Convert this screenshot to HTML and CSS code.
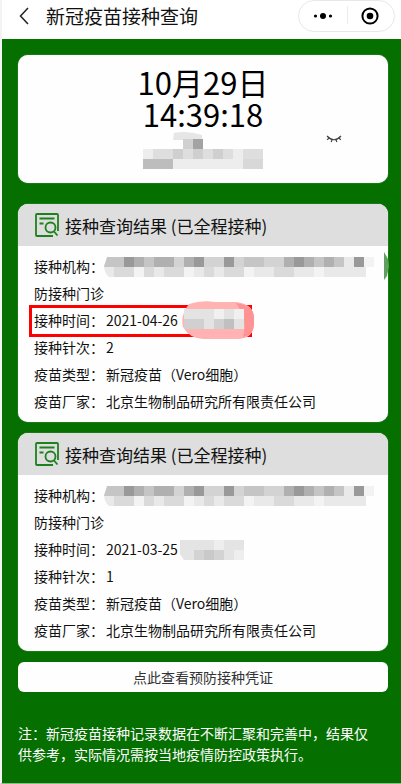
FILE: index.html
```html
<!DOCTYPE html>
<html lang="zh-CN">
<head>
    <meta charset="UTF-8">
    <meta name="viewport" content="width=device-width, initial-scale=1.0">
    <title>新冠疫苗接种查询</title>
    <link rel="stylesheet" href="styles.css">
</head>
<body>

    <!-- shared drawings -->
    <svg class="defs" width="0" height="0" aria-hidden="true">
        <symbol id="icon-result" viewBox="0 0 24 24">
            <path d="M18 23H2Q1 23 1 22V2Q1 1 2 1H22Q23 1 23 2V18M4.5 5.5H19.5M4.5 10.5H8.5"/>
            <circle cx="15.5" cy="14.5" r="5"/>
            <path d="M19 18.5L22.5 22.5"/>
        </symbol>
        <symbol id="mosaic-long" viewBox="0 0 270 20">
            <path fill="#e9e9e9" d="M4 0H262V20H5Q0 16 0 8Z"/>
            <path fill="#c5c5c5" d="M3 0H20V10H0ZM40 0h10v10h-10zM140 0h20v10h-20zM210 0h10v10h-10zM230 0h10v10h-10z"/>
            <path fill="#999" d="M20 0h10v10h-10zM90 0h10v10h-10zM120 0h10v10h-10zM190 0h10v10h-10zM250 0h10v10h-10z"/>
            <path fill="#b0b0b0" d="M30 0h10v10h-10zM50 0h20v10h-20zM80 0h10v10h-10zM180 0h10v10h-10zM200 0h10v10h-10zM220 0h10v10h-10z"/>
            <path fill="#d3d3d3" d="M70 0h10v10h-10zM100 0h20v10h-20zM130 0h10v10h-10zM160 0h20v10h-20z"/>
            <path fill="#dadada" d="M10 10h20v10h-20zM40 10h10v10h-10zM60 10h20v10h-20zM100 10h10v10h-10zM120 10h20v10h-20zM170 10h20v10h-20z"/>
            <path fill="#f3f3f3" d="M30 10h10v10h-10zM80 10h10v10h-10zM140 10h10v10h-10zM210 10h10v10h-10zM260 0h10v10h-10z"/>
        </symbol>
    </svg>

    <header class="navbar">
        <button class="back" type="button" aria-label="返回">
            <svg width="10" height="18" viewBox="0 0 10 18"><path d="M9 1L1.5 9L9 17"/></svg>
        </button>
        <h1>新冠疫苗接种查询</h1>
        <div class="capsule">
            <button type="button" aria-label="更多">
                <svg width="20" height="8" viewBox="0 0 20 8"><circle cx="2.5" cy="4" r="1.6"/><circle cx="10" cy="4" r="3"/><circle cx="17.5" cy="4" r="1.6"/></svg>
            </button>
            <button type="button" aria-label="关闭">
                <svg width="18" height="18" viewBox="0 0 18 18"><circle class="ring" cx="9" cy="9" r="7.6"/><circle cx="9" cy="9" r="3.3"/></svg>
            </button>
        </div>
    </header>

    <main class="page">
        <section class="card clock">
            <div class="date">10月29日</div>
            <div class="time">14:39:18</div>
            <svg class="person" width="120" height="38" viewBox="0 0 120 38" aria-hidden="true">
                <path fill="#e6e6e6" d="M31 2Q44 -1 59 4V9H30Z"/>
                <path fill="#d0d0d0" d="M40 8h10v10h-10z"/>
                <path fill="#a3a3a3" d="M50 8h10v10h-10z"/>
                <path fill="#dedede" d="M0 18h120v10h-120z"/>
                <path fill="#cfcfcf" d="M30 18h10v10h-10zM50 18h10v10h-10zM70 18h10v10h-10z"/>
                <path fill="#ededed" d="M0 18h10v10h-10zM90 18h10v10h-10zM30 28h70v10h-70z"/>
                <path fill="#bdbdbd" d="M0 28h30v10h-30z"/>
                <path fill="#d8d8d8" d="M100 28h20v10h-20z"/>
            </svg>
            <button class="eye" type="button" aria-label="显示姓名">
                <svg width="16" height="8" viewBox="0 0 16 8"><path d="M1 1Q8 8.5 15 1M3 3L1.2 4.8M6 4.6L5.2 7M10 4.6L10.8 7M13 3L14.8 4.8"/></svg>
            </button>
        </section>

        <section class="card result first">
            <h2><svg class="icon" width="24" height="24"><use href="#icon-result"/></svg>接种查询结果 (已全程接种)</h2>
            <div class="rows">
                <div class="row"><span class="label">接种机构：</span><svg class="long" width="270" height="20"><use href="#mosaic-long"/></svg></div>
                <div class="row">防接种门诊</div>
                <div class="row marked">
                    <span class="label">接种时间：</span><span>2021-04-26</span>
                    <svg class="smudge" width="74" height="38" viewBox="0 0 74 38" aria-hidden="true">
                        <path fill="#ffb3b3" d="M8 3Q20 -1 34 1H55Q73 3 73 17V24Q72 37 58 38H22Q8 37 2 26Q-1 14 8 3Z"/>
                        <path fill="#ff9292" d="M55 2Q73 4 73 17V24Q72 34 62 36Q67 18 55 2Z"/>
                        <path fill="#e3e3e3" d="M3 8H63V28H3Z"/>
                        <path fill="#d0d0d0" d="M3 18h20v10h-20zM33 18h10v10h-10z"/>
                        <path fill="#c0c0c0" d="M43 18h10v10h-10z"/>
                        <path fill="#f0f0f0" d="M33 8h10v10h-10zM53 8h10v10h-10z"/>
                    </svg>
                </div>
                <div class="row"><span class="label">接种针次：</span><span>2</span></div>
                <div class="row"><span class="label">疫苗类型：</span><span>新冠疫苗（Vero细胞）</span></div>
                <div class="row"><span class="label">疫苗厂家：</span><span>北京生物制品研究所有限责任公司</span></div>
            </div>
            <svg class="chip" width="5" height="28" viewBox="0 0 5 28" aria-hidden="true"><path d="M0 0L4 7L5 14L3 24L0 28Z"/></svg>
        </section>

        <section class="card result">
            <h2><svg class="icon" width="24" height="24"><use href="#icon-result"/></svg>接种查询结果 (已全程接种)</h2>
            <div class="rows">
                <div class="row"><span class="label">接种机构：</span><svg class="long" width="270" height="20"><use href="#mosaic-long"/></svg></div>
                <div class="row">防接种门诊</div>
                <div class="row">
                    <span class="label">接种时间：</span><span>2021-03-25</span>
                    <svg class="short" width="64" height="20" viewBox="0 0 64 20" aria-hidden="true">
                        <path fill="#e4e4e4" d="M0 0H64V20H4L0 14Z"/>
                        <path fill="#d3d3d3" d="M14 10h10v10h-10zM34 10h10v10h-10z"/>
                        <path fill="#c9c9c9" d="M24 10h10v10h-10z"/>
                        <path fill="#eee" d="M34 0h10v10h-10zM54 10h10v10h-10z"/>
                    </svg>
                </div>
                <div class="row"><span class="label">接种针次：</span><span>1</span></div>
                <div class="row"><span class="label">疫苗类型：</span><span>新冠疫苗（Vero细胞）</span></div>
                <div class="row"><span class="label">疫苗厂家：</span><span>北京生物制品研究所有限责任公司</span></div>
            </div>
        </section>

        <button class="voucher" type="button">点此查看预防接种凭证</button>

        <p class="note">注：新冠疫苗接种记录数据在不断汇聚和完善中，结果仅供参考，实际情况需按当地疫情防控政策执行。</p>
    </main>

</body>
</html>
```
FILE: styles.css
```css
*, *::before {
    box-sizing: border-box;
}
body {
    margin: 0;
    border-left: 2px solid #f3f3f3;
    border-bottom: 1px solid #8fb98f;
    background: #057000;
    color: #111;
    font-family: "Noto Sans CJK SC", sans-serif;
    font-size: 14px;
}
button {
    margin: 0;
    padding: 0;
    border: none;
    background: none;
    color: inherit;
    font: inherit;
    cursor: pointer;
}
svg {
    display: block;
    flex: none;
}
h1, h2, p {
    margin: 0;
    font-weight: normal;
}
.defs {
    position: absolute;
}

/* top bar */
.navbar {
    display: flex;
    align-items: flex-start;
    height: 39px;
    padding: 0 6px 0 17px;
    background: #fff;
}
.back {
    padding: 7px 0;
}
.back svg {
    fill: none;
    stroke: #222;
    stroke-width: 1.5;
}
.navbar h1 {
    flex: 1;
    margin-left: 17px;
    font-size: 19px;
    line-height: 32px;
}
.capsule {
    display: flex;
    width: 97px;
    height: 32px;
    border: 1px solid #e8e8e8;
    border-radius: 16px;
}
.capsule button {
    flex: 1;
    display: flex;
    align-items: center;
    justify-content: center;
}
.capsule button + button {
    position: relative;
}
.capsule button + button::before {
    content: "";
    position: absolute;
    left: 0;
    top: 5px;
    bottom: 7px;
    width: 1px;
    background: #ececec;
}
.ring {
    fill: none;
    stroke: #000;
    stroke-width: 2;
}

.page {
    padding: 16px 13px 18px 16px;
}
.card {
    position: relative;
    background: #fefefe;
    border-radius: 10px;
    box-shadow: 0 0 1px #cfe0cf;
}

/* date and time */
.clock {
    display: flex;
    flex-direction: column;
    align-items: center;
    height: 128px;
    margin-bottom: 21px;
    padding-top: 11px;
    color: #000;
    font-size: 31px;
    line-height: 32px;
}
.person {
    margin-top: 1px;
}
.eye {
    position: absolute;
    right: 46px;
    top: 80px;
}
.eye svg {
    fill: none;
    stroke: #444;
    stroke-width: 1.2;
}

/* results */
.result {
    margin-bottom: 11px;
}
.result h2 {
    display: flex;
    align-items: center;
    gap: 6px;
    height: 42px;
    padding-left: 17px;
    border-radius: 10px 10px 0 0;
    background: #dedede;
    font-size: 17px;
}
.icon {
    fill: none;
    stroke: #1d811d;
    stroke-width: 1.8;
}
.rows {
    padding: 7px 14px 7px 16px;
}
.row {
    display: flex;
    align-items: center;
    position: relative;
    height: 27px;
    line-height: 27px;
    white-space: nowrap;
}
.label {
    width: 72px;
}
.long {
    margin-left: -2px;
}
.short {
    margin-left: 2px;
}
.marked::before {
    content: "";
    position: absolute;
    left: -5px;
    top: -2px;
    width: 223px;
    height: 32px;
    border: 3px solid #f00;
}
.smudge {
    position: absolute;
    left: 147px;
    top: -6px;
}
.chip {
    position: absolute;
    right: -1px;
    top: 48px;
    fill: #5fa05f;
}

.voucher {
    display: block;
    width: 100%;
    height: 30px;
    border-radius: 6px;
    background: #fefefe;
    color: #333;
    line-height: 30px;
}
.note {
    margin-top: 31px;
    padding-right: 10px;
    color: #fff;
    line-height: 21px;
}
```
